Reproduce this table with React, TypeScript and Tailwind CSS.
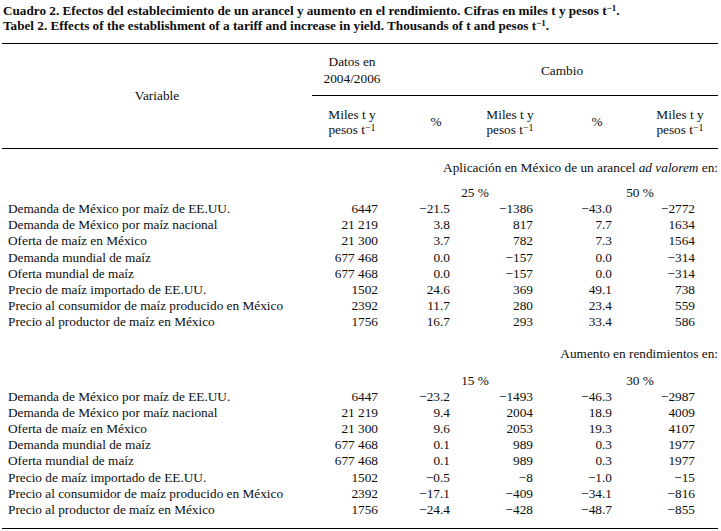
import React from 'react';

const cols = 'grid grid-cols-[310px_80px_78px_80px_80px_88px]';

type Row = [string, string, string, string, string, string];

const tariffRows: Row[] = [
  ['Demanda de México por maíz de EE.UU.', '6447', '−21.5', '−1386', '−43.0', '−2772'],
  ['Demanda de México por maíz nacional', '21 219', '3.8', '817', '7.7', '1634'],
  ['Oferta de maíz en México', '21 300', '3.7', '782', '7.3', '1564'],
  ['Demanda mundial de maíz', '677 468', '0.0', '−157', '0.0', '−314'],
  ['Oferta mundial de maíz', '677 468', '0.0', '−157', '0.0', '−314'],
  ['Precio de maíz importado de EE.UU.', '1502', '24.6', '369', '49.1', '738'],
  ['Precio al consumidor de maíz producido en México', '2392', '11.7', '280', '23.4', '559'],
  ['Precio al productor de maíz en México', '1756', '16.7', '293', '33.4', '586'],
];

const yieldRows: Row[] = [
  ['Demanda de México por maíz de EE.UU.', '6447', '−23.2', '−1493', '−46.3', '−2987'],
  ['Demanda de México por maíz nacional', '21 219', '9.4', '2004', '18.9', '4009'],
  ['Oferta de maíz en México', '21 300', '9.6', '2053', '19.3', '4107'],
  ['Demanda mundial de maíz', '677 468', '0.1', '989', '0.3', '1977'],
  ['Oferta mundial de maíz', '677 468', '0.1', '989', '0.3', '1977'],
  ['Precio de maíz importado de EE.UU.', '1502', '−0.5', '−8', '−1.0', '−15'],
  ['Precio al consumidor de maíz producido en México', '2392', '−17.1', '−409', '−34.1', '−816'],
  ['Precio al productor de maíz en México', '1756', '−24.4', '−428', '−48.7', '−855'],
];

function MilesLabel() {
  return (
    <>
      <div>Miles t y</div>
      <div>
        pesos t<sup className="text-[10px] relative -top-[3px]">−1</sup>
      </div>
    </>
  );
}

function DataRows({ rows }: { rows: Row[] }) {
  return (
    <div className="leading-[16.2px]">
      {rows.map((r, i) => (
        <div key={i} className={cols}>
          <div className="pl-[6px] whitespace-nowrap">{r[0]}</div>
          <div className="text-right pr-[14px]">{r[1]}</div>
          <div className="text-right pr-[20px]">{r[2]}</div>
          <div className="text-right pr-[17px]">{r[3]}</div>
          <div className="text-right pr-[18px]">{r[4]}</div>
          <div className="text-right pr-[23px]">{r[5]}</div>
        </div>
      ))}
    </div>
  );
}

function PercentRow({ a, b }: { a: string; b: string }) {
  return (
    <div className={`${cols} leading-[16px]`}>
      <div className="col-span-2" />
      <div className="col-span-2 text-center pl-[8px]">{a}</div>
      <div className="col-span-2 text-center pl-[12px]">{b}</div>
    </div>
  );
}

export default function App() {
  return (
    <div className="w-[721px] h-[531px] bg-white text-[#0d0d0d] [font-family:'Liberation_Serif','Times_New_Roman',serif] text-[13.3px] overflow-hidden">
      {/* Caption */}
      <div className="pl-[3px] pt-[3px] font-bold text-[13.2px] leading-[15px] whitespace-nowrap">
        <p>
          Cuadro 2. Efectos del establecimiento de un arancel y aumento en el rendimiento. Cifras en miles t y pesos t
          <sup className="text-[9px] leading-none">−1</sup>.
        </p>
        <p>
          Tabel 2. Effects of the establishment of a tariff and increase in yield. Thousands of t and pesos t
          <sup className="text-[9px] leading-none">−1</sup>.
        </p>
      </div>

      <div className="ml-[2px] w-[716px] mt-[10px]">
        {/* Header */}
        <div className={`${cols} border-t-[1.5px] border-b-[1.5px] border-black`}>
          <div className="row-span-2 flex items-center justify-center">Variable</div>
          <div className="h-[52px] flex flex-col items-center justify-center border-b border-black leading-[17px] pt-[1px]">
            <div>Datos en</div>
            <div>2004/2006</div>
          </div>
          <div className="col-span-4 h-[52px] flex items-center justify-center border-b border-black pl-[14px] pt-[2px]">
            Cambio
          </div>
          <div className="h-[52px] flex flex-col items-center justify-center leading-[15px]">
            <MilesLabel />
          </div>
          <div className="h-[52px] flex items-center justify-center pl-[10px]">%</div>
          <div className="h-[52px] flex flex-col items-center justify-center leading-[15px]">
            <MilesLabel />
          </div>
          <div className="h-[52px] flex items-center justify-center pl-[14px]">%</div>
          <div className="h-[52px] flex flex-col items-center justify-center leading-[15px] pl-[12px]">
            <MilesLabel />
          </div>
        </div>

        {/* Tariff section */}
        <div className="text-right leading-[16px] mt-[11px]">
          Aplicación en México de un arancel <i>ad valorem</i> en:
        </div>
        <div className="mt-[9px]">
          <PercentRow a="25 %" b="50 %" />
        </div>
        <DataRows rows={tariffRows} />

        {/* Yield section */}
        <div className="text-right leading-[16px] mt-[15px]">Aumento en rendimientos en:</div>
        <div className="mt-[11px]">
          <PercentRow a="15 %" b="30 %" />
        </div>
        <DataRows rows={yieldRows} />

        <div className="mt-[10px] border-t-[1.5px] border-black" />
      </div>
    </div>
  );
}
